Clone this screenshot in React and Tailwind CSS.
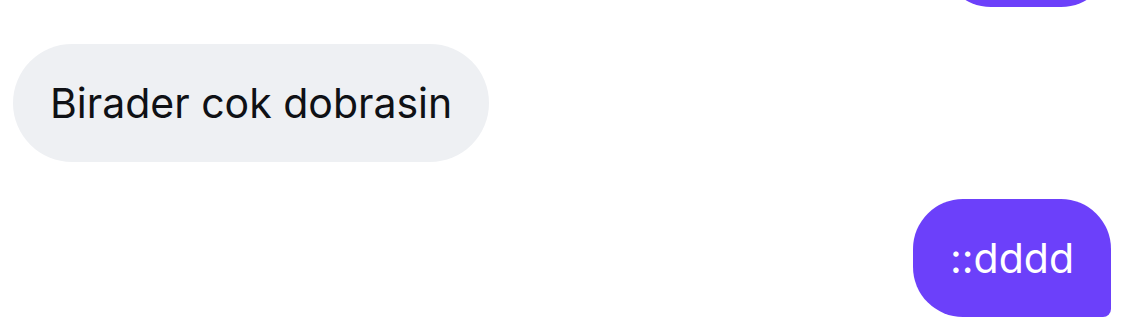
import React from 'react';

const messages = [
    { id: 1, text: 'lol', mine: true },
    { id: 2, text: 'Birader cok dobrasin', mine: false },
    { id: 3, text: '::dddd', mine: true, last: true },
];

const Bubble = ({ msg }) => {
    const base = 'px-[37px] py-[35px] text-[41px] leading-[48px] whitespace-nowrap';
    if (msg.mine) {
        return (
            <div className="flex justify-end">
                <div className={`${base} bg-[#6c40fa] text-white ${msg.last ? 'rounded-[50px] rounded-br-[8px]' : 'rounded-[50px] min-w-[170px]'}`}>
                    {msg.text}
                </div>
            </div>
        );
    }
    return (
        <div className="flex justify-start">
            <div className={`${base} bg-[#eef0f3] text-[#0f1115] rounded-[60px]`}>
                {msg.text}
            </div>
        </div>
    );
};

export default function App() {
    return (
        <div className="h-[317px] w-full overflow-hidden bg-white" style={{ fontFamily: 'Inter, "Noto Sans", sans-serif' }}>
            <div className="flex h-full flex-col justify-end gap-[37px] pl-[13px] pr-[23px]">
                {messages.map((m) => (
                    <Bubble key={m.id} msg={m} />
                ))}
            </div>
        </div>
    );
}
